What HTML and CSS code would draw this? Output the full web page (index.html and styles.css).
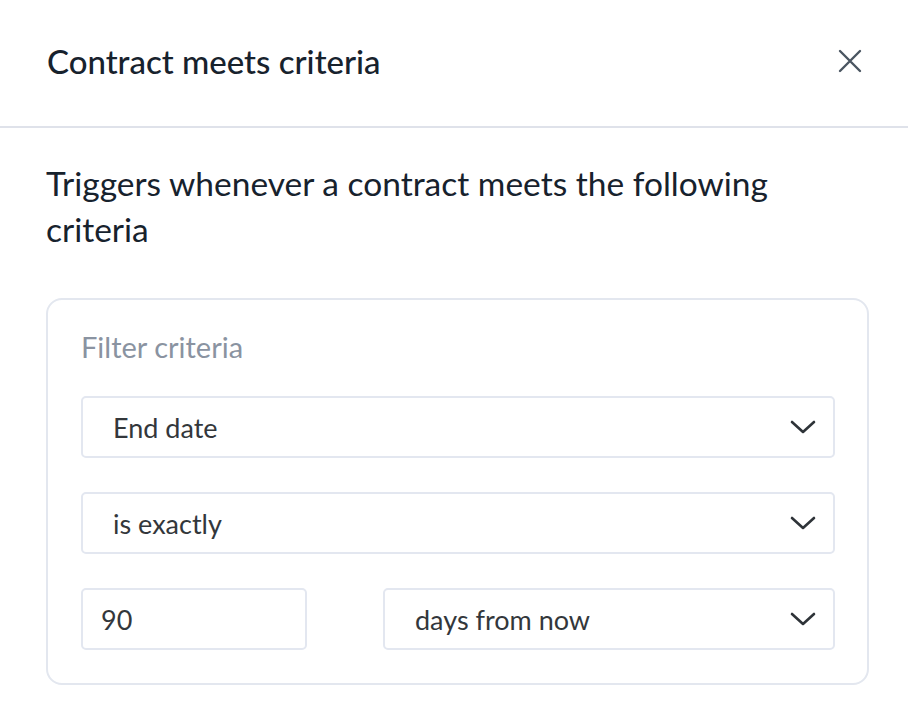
FILE: index.html
```html
<!DOCTYPE html>
<html lang="en">
<head>
    <meta charset="UTF-8">
    <meta name="viewport" content="width=device-width, initial-scale=1.0">
    <title>Contract meets criteria</title>
    <link rel="stylesheet" href="styles.css">
</head>
<body>

    <div class="panel">
        <header class="panel-header">
            <h2>Contract meets criteria</h2>
            <button class="close-btn" aria-label="Close">
                <svg width="28" height="28" viewBox="0 0 28 28" fill="none" stroke="#4a5561" stroke-width="2.4" stroke-linecap="round">
                    <path d="M4 4 L24 24 M24 4 L4 24"/>
                </svg>
            </button>
        </header>

        <div class="panel-body">
            <p class="intro">Triggers whenever a contract meets the following criteria</p>

            <div class="filter-card">
                <div class="filter-label">Filter criteria</div>

                <div class="select">
                    <span>End date</span>
                    <svg class="chevron" width="28" height="16" viewBox="0 0 28 16" fill="none" stroke="#2e3338" stroke-width="2.6" stroke-linecap="round" stroke-linejoin="round"><path d="M3 3 L14 13 L25 3"/></svg>
                </div>

                <div class="select">
                    <span>is exactly</span>
                    <svg class="chevron" width="28" height="16" viewBox="0 0 28 16" fill="none" stroke="#2e3338" stroke-width="2.6" stroke-linecap="round" stroke-linejoin="round"><path d="M3 3 L14 13 L25 3"/></svg>
                </div>

                <div class="filter-row">
                    <div class="text-input">90</div>
                    <div class="select">
                        <span>days from now</span>
                        <svg class="chevron" width="28" height="16" viewBox="0 0 28 16" fill="none" stroke="#2e3338" stroke-width="2.6" stroke-linecap="round" stroke-linejoin="round"><path d="M3 3 L14 13 L25 3"/></svg>
                    </div>
                </div>
            </div>
        </div>
    </div>

</body>
</html>
```

FILE: styles.css
```css
body {
    margin: 0;
    background-color: #fff;
    font-family: Lato, "Open Sans", sans-serif;
    color: #17222d;
}

.panel-header {
    display: flex;
    justify-content: space-between;
    align-items: center;
    height: 121px;
    padding: 0 44px 5px 47px;
    border-bottom: 2px solid #dfe2ea;
}

.panel-header h2 {
    margin: 0;
    font-size: 33px;
    font-weight: 500;
    color: #17222d;
}

.close-btn {
    background: none;
    border: none;
    padding: 0;
    display: flex;
    cursor: pointer;
}

.panel-body {
    padding: 32px 39px 0 46px;
}

.intro {
    margin: 0 0 46px;
    font-size: 33.5px;
    line-height: 46px;
    color: #17222d;
    max-width: 760px;
}

.filter-card {
    border: 2px solid #e3e7ef;
    border-radius: 16px;
    padding: 31px 32px 33px 33px;
}

.filter-label {
    font-size: 29px;
    line-height: 32px;
    color: #8a93a1;
    margin-bottom: 33px;
}

.select,
.text-input {
    height: 62px;
    box-sizing: border-box;
    border: 2px solid #e3e7f0;
    border-radius: 5px;
    display: flex;
    align-items: center;
    font-size: 27px;
    color: #33373b;
}

.select {
    justify-content: space-between;
    padding: 0 16px 0 30px;
    margin-bottom: 34px;
}

.text-input {
    padding: 0 18px;
}

.filter-row {
    display: grid;
    grid-template-columns: 1fr 2fr;
    gap: 76px;
}

.filter-row .select {
    margin-bottom: 0;
}
```
